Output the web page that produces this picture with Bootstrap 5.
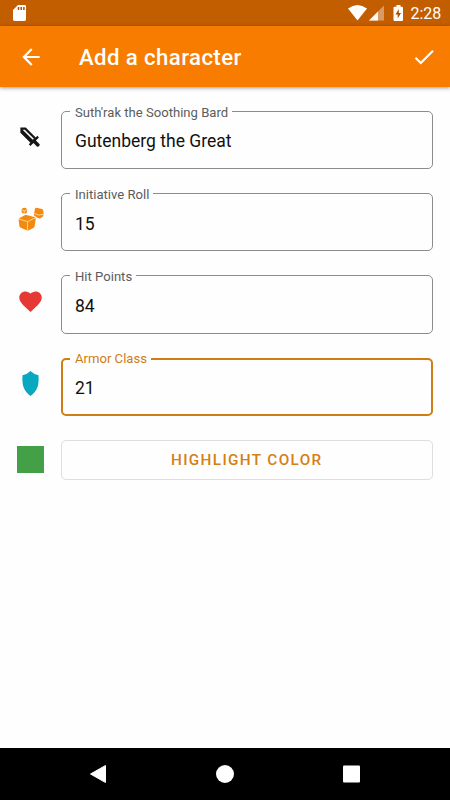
<!DOCTYPE html>
<html lang="en">
<head>
<meta charset="utf-8">
<meta name="viewport" content="width=device-width, initial-scale=1">
<title>Add a character</title>
<link href="https://cdn.jsdelivr.net/npm/bootstrap@5.3.0/dist/css/bootstrap.min.css" rel="stylesheet">
<style>
body{font-family:Roboto,sans-serif;height:800px;background:#fefefe;overflow:hidden}
svg{display:block;flex:none}
.status-bar{height:26px;background:#c25d00;padding:0 9px 0 13px;font-size:16px;line-height:26px}
.clock{padding-top:2px;width:30.500px;white-space:nowrap}
.app-bar{height:61px;background:#f77c00;padding:0 13.5px 0 18px;box-shadow:0 1px 4px rgba(0,0,0,.4)}
.app-title{font-size:22.2px;font-weight:500;line-height:30px;margin-left:35px;letter-spacing:.4px;padding-top:1px}
.form-area{padding:24px 17.5px 0 17px;gap:24px}
.field-row{gap:17px}
.row-icon{width:27px;height:27px}
.field-row>.row-icon{margin-bottom:6px}
.field-box{height:58.2px;border:1px solid #8c8c8c;border-radius:5px;padding:3px 13px 0;font-size:17.5px;color:#111;background:transparent}
.field-label{left:9px;top:-7.3px;padding:0 4px 0 5px;background:#fefefe;font-size:13.1px;line-height:18px;color:#5c5c5c;white-space:nowrap}
.field-active .field-box{border:2px solid #cf7d14;padding:2px 12px 0}
.field-active .field-label{color:#cf7d14;top:-8px}
.color-swatch{width:27px;height:27px;background:#43a047}
.color-btn,.color-btn:hover{height:40px;border:1px solid #dedede;border-radius:5px;color:#d47f14;font-size:15.3px;font-weight:500;letter-spacing:1.35px;padding:1px 0 0;background:transparent}
.system-nav{height:52px;background:#000}
</style>
<script src="https://cdn.jsdelivr.net/npm/bootstrap@5.3.0/dist/js/bootstrap.bundle.min.js"></script>
</head>
<body class="d-flex flex-column">
<div class="status-bar d-flex align-items-center text-white">
  <svg width="14" height="17" viewBox="0 0 14 17"><path d="M5 0h6.600Q13 0 13 1.400v13.200Q13 16 11.600 16H1.400Q0 16 0 14.600V5Z" fill="#fff"/><path d="M5.500 2v3M8.200 2v3M10.900 2v3" stroke="#a75000" stroke-width="1.500"/></svg>
  <svg class="ms-auto" width="63" height="26" viewBox="0 0 63 26"><path d="M0 8.500Q9.500 1.500 19 8.500L9.500 20.500Z" fill="#fff"/><path d="M36 5.500V20.500H21Z" fill="#d99b64"/><path d="M30 11.500V20.500H21Z" fill="#fff"/><path d="M48.500 5h4V6.700h1.500q1 0 1 1v12.300q0 1-1 1H46.500q-1 0-1-1V7.700q0-1 1-1h2Z" fill="#fff"/><path d="M50.800 9l-3.300 5.500h2.200V18.500l3.300-5.500h-2.200Z" fill="#a75000"/></svg>
  <span class="clock">2:28</span>
</div>
<header class="app-bar d-flex align-items-center text-white position-relative">
  <svg width="26" height="26" viewBox="0 0 24 24" fill="#fff"><path d="M20 11H7.830l5.590-5.590L12 4l-8 8 8 8 1.410-1.410L7.830 13H20v-2z"/></svg>
  <h1 class="app-title mb-0">Add a character</h1>
  <svg class="ms-auto" width="26" height="26" viewBox="0 0 24 24" fill="#fff"><path d="M9 16.170L4.830 12l-1.420 1.410L9 19 21 7l-1.410-1.410z"/></svg>
</header>
<main class="form-area d-flex flex-column flex-grow-1">
  <div class="field-row d-flex align-items-center">
    <svg class="row-icon" viewBox="0 0 24 24"><path fill="#151515" d="M6.920 5H5L14 14L15 13.060M19.960 19.120L19.120 19.960C18.730 20.350 18.100 20.350 17.710 19.960L14.590 16.840L11.910 19.500L10.500 18.090L11.920 16.670L3 7.750V3H7.750L16.670 11.920L18.090 10.500L19.500 11.910L16.830 14.580L19.950 17.700C20.350 18.100 20.350 18.730 19.960 19.120Z"/></svg>
    <div class="position-relative flex-grow-1"><div class="field-box d-flex align-items-center">Gutenberg the Great</div><span class="field-label position-absolute">Suth'rak the Soothing Bard</span></div>
  </div>
  <div class="field-row d-flex align-items-center">
    <svg class="row-icon" viewBox="3 4 81 81" fill="#f28a0f"><path d="M31 31L55 37Q59 39 59 43L56 65Q55 68 52 70L38 77Q35 79 32 77L14 69Q11 67 10 63L8 46Q8 42 11 40L26 32Q28 30 31 31Z"/><path d="M61 9L78 13Q82 15 82 19L83 30Q82 34 79 37L73 41Q69 42 66 40L56 34Q53 31 54 27L57 12Q58 9 61 9Z"/><circle cx="25" cy="18" r="8.500"/><path d="M9 43L35 51L58 39M35 51L34 78M54 26Q67 35 83 29M25 19L24 28M25 19L16 15M25 19L34 15" fill="none" stroke="#fff5df" stroke-width="2"/></svg>
    <div class="position-relative flex-grow-1"><div class="field-box d-flex align-items-center">15</div><span class="field-label position-absolute">Initiative Roll</span></div>
  </div>
  <div class="field-row d-flex align-items-center">
    <svg class="row-icon" viewBox="0 0 24 24"><path fill="#e53935" d="M12 21.350l-1.450-1.320C5.400 15.360 2 12.280 2 8.500 2 5.420 4.420 3 7.500 3c1.740 0 3.410.81 4.500 2.090C13.090 3.810 14.760 3 16.500 3 19.580 3 22 5.420 22 8.500c0 3.780-3.400 6.860-8.550 11.540z"/></svg>
    <div class="position-relative flex-grow-1"><div class="field-box d-flex align-items-center">84</div><span class="field-label position-absolute">Hit Points</span></div>
  </div>
  <div class="field-row field-active d-flex align-items-center">
    <svg class="row-icon" viewBox="0 0 27 27"><path fill="#08a8c1" d="M13.500 1Q17 4.500 21.500 5.200Q22 13 20.500 17Q18.500 22.500 13.500 26Q8.500 22.500 6.500 17Q5 13 5.500 5.200Q10 4.500 13.500 1Z"/></svg>
    <div class="position-relative flex-grow-1"><div class="field-box d-flex align-items-center">21</div><span class="field-label position-absolute">Armor Class</span></div>
  </div>
  <div class="field-row d-flex align-items-center">
    <div class="color-swatch flex-shrink-0"></div>
    <button type="button" class="btn color-btn flex-grow-1">HIGHLIGHT COLOR</button>
  </div>
</main>
<nav class="system-nav">
  <svg width="450" height="52" viewBox="0 0 450 52" fill="#fff"><path d="M105.500 17.500V34.500L90.500 26Z" stroke="#fff" stroke-width="1" stroke-linejoin="round"/><circle cx="225" cy="26" r="9"/><rect x="343" y="17.500" width="17" height="17" rx="1"/></svg>
</nav>
</body>
</html>
